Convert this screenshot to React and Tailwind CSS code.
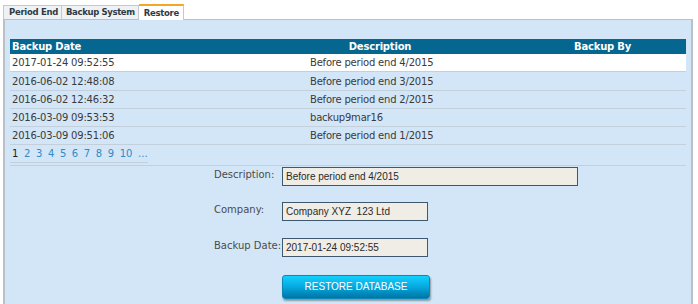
import React from 'react';

const rows = [
    { date: '2017-01-24 09:52:55', desc: 'Before period end 4/2015', by: '' },
    { date: '2016-06-02 12:48:08', desc: 'Before period end 3/2015', by: '' },
    { date: '2016-06-02 12:46:32', desc: 'Before period end 2/2015', by: '' },
    { date: '2016-03-09 09:53:53', desc: 'backup9mar16', by: '' },
    { date: '2016-03-09 09:51:06', desc: 'Before period end 1/2015', by: '' },
];

const pages = ['2', '3', '4', '5', '6', '7', '8', '9', '10', '...'];

const Field = ({ label, value, wide, tall }) => (
    <div className={`flex items-start ${tall ? 'h-[36px]' : 'h-[35px]'}`}>
        <label className="w-[68px] pt-[1px] text-[10px] leading-[14px] text-[#4b4b4b]">{label}</label>
        <div
            className={`${wide ? 'w-[296px]' : 'w-[146px]'} h-[19px] border border-[#3e5870] bg-[#efede6] pl-[3px] flex items-center font-['Liberation_Sans',Arial,sans-serif] text-[10px] text-[#2a2a2a] whitespace-pre`}
        >
            {value}
        </div>
    </div>
);

const App = () => {
    return (
        <div className="w-[698px] h-[304px] bg-white overflow-hidden font-['DejaVu_Sans',Verdana,sans-serif]">
            {/* Tabs */}
            <div className="flex items-end pl-[3px] pt-[3px] h-[19px]">
                <div className="h-[14px] pl-[5px] pr-[3px] flex items-center border border-b-0 border-[#c3c9cf] bg-[#eef2f5] text-[8.5px] font-bold tracking-[-0.3px] text-[#2f3a44]">
                    Period End
                </div>
                <div className="h-[14px] pl-[4px] pr-[3px] flex items-center border border-b-0 border-l-0 border-[#c3c9cf] bg-[#eef2f5] text-[8.5px] font-bold tracking-[-0.35px] text-[#2f3a44]">
                    Backup System
                </div>
                <div className="h-[16px] pl-[5px] pr-[4px] flex items-center border-t-2 border-r border-t-[#f5a623] border-r-[#c3c9cf] bg-white text-[8.5px] font-bold tracking-[-0.3px] text-[#2f3a44] relative top-[1px]">
                    Restore
                </div>
            </div>

            {/* Panel */}
            <div className="ml-[3px] w-[690px] h-[286px] bg-[#d3e6f7] border-t border-x-2 border-[#b9c0c7] border-b-0 pl-[5px] pr-[4px] pt-[19px]">
                {/* Table */}
                <div className="w-[676px]">
                    <div className="flex h-[15px] items-center bg-[#05668f] text-white text-[10px] font-bold tracking-[-0.2px]">
                        <div className="w-[298px] pl-[2px]">Backup Date</div>
                        <div className="w-[144px] text-center">Description</div>
                        <div className="flex-1 pl-[122px]">Backup By</div>
                    </div>
                    {rows.map((r, i) => (
                        <div
                            key={r.date}
                            className={`flex h-[18px] items-center border-b border-[#c3d0db] text-[10px] tracking-[-0.2px] text-[#3a3a3a] ${i === 0 ? 'bg-white' : ''} ${i === 1 ? 'h-[19px]' : ''}`}
                        >
                            <div className="w-[298px] pl-[2px]">{r.date}</div>
                            <div className="w-[220px] pl-[2px]">{r.desc}</div>
                            <div className="flex-1">{r.by}</div>
                        </div>
                    ))}
                    <div className="h-[18px] w-[138px] flex items-center gap-[5.6px] pl-[2px] border-b border-[#c3d0db] text-[10px]">
                        <span className="text-[#1e1e1e]">1</span>
                        {pages.map((p) => (
                            <span key={p} className="text-[#2e8bc6]">{p}</span>
                        ))}
                    </div>
                    <div className="h-[3px] border-b border-[#c3d0db]"></div>
                </div>

                {/* Details form */}
                <div className="pl-[204px] pt-[1px]">
                    <Field label="Description:" value="Before period end 4/2015" wide />
                    <Field label="Company:" value="Company XYZ  123 Ltd" tall />
                    <Field label="Backup Date:" value="2017-01-24 09:52:55" />
                    <div className="pl-[68px]">
                        <button className="w-[148px] h-[24px] rounded-[3px] bg-gradient-to-b from-[#12d0ff] via-[#06a8df] to-[#0074a4] border border-[#0a88b8] shadow-[1px_2px_2px_rgba(0,0,0,0.35)] text-white text-[10px] font-['Liberation_Sans',Arial,sans-serif]">
                            RESTORE DATABASE
                        </button>
                    </div>
                </div>
            </div>
        </div>
    );
};

export default App;
